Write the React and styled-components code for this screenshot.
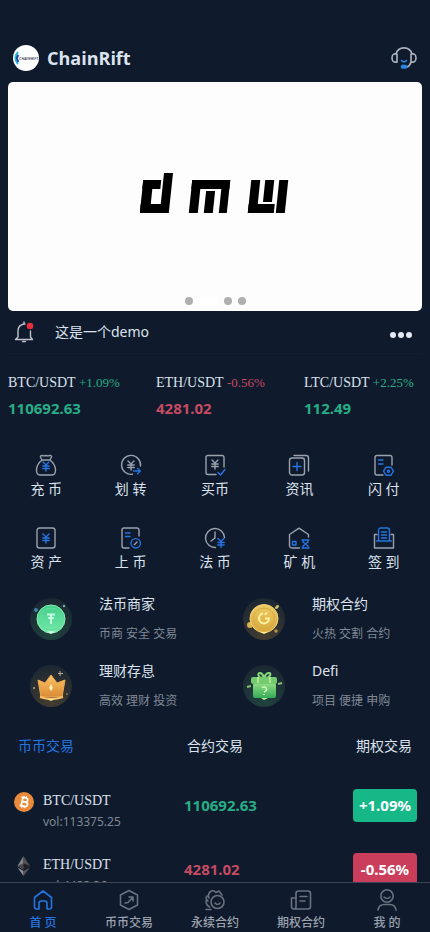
import React from "react";
import styled, { createGlobalStyle } from "styled-components";

const c = {
  bg: "#0f1a2c",
  text: "#dce3ee",
  muted: "#7f8896",
  line: "#9ba2ae",
  blue: "#2475e0",
  green: "#27ae86",
  red: "#c64b62",
};

const GlobalStyle = createGlobalStyle`
  * { box-sizing: border-box; }
  body {
    margin: 0;
    background: ${c.bg};
    color: ${c.text};
    font-family: "Noto Sans", "Noto Sans CJK SC", sans-serif;
    font-size: 14px;
    line-height: 20px;
  }
  button { font: inherit; color: inherit; background: none; border: 0; padding: 0; cursor: pointer; }
  a { color: inherit; text-decoration: none; }
  h1, p { margin: 0; }
  svg { display: block; }
`;

const Screen = styled.div`
  display: flex;
  flex-direction: column;
  height: 100vh;
`;

const Content = styled.main`
  flex: 1;
  min-height: 0;
  overflow-y: auto;
  scrollbar-width: none;
`;

const Header = styled.header`
  display: flex;
  align-items: center;
  gap: 8px;
  padding: 42px 13px 8px;
`;

const Brand = styled.h1`
  flex: 1;
  font-family: "Open Sans", sans-serif;
  font-size: 18px;
  font-weight: 700;
  line-height: 32px;
`;

const Banner = styled.section`
  display: grid;
  grid-template-rows: 1fr auto;
  justify-items: center;
  height: 229px;
  margin: 0 8px;
  padding: 9px 0 6px;
  border-radius: 5px;
  background: #fefdfe;
`;

const BannerLogo = styled.div`
  align-self: center;
`;

const Dots = styled.div`
  display: flex;
  gap: 6px;
`;

const Dot = styled.button`
  width: ${(p) => (p.$active ? 19 : 8)}px;
  height: 8px;
  border-radius: 4px;
  background: ${(p) => (p.$active ? "#fff" : "#afafaf")};
`;

const Notice = styled.section`
  display: flex;
  align-items: center;
  height: 43px;
  margin: 0 8px;
  padding: 0 10px 0 5px;
  border-bottom: 1px solid #131e30;
`;

const NoticeText = styled.p`
  flex: 1;
  padding-left: 20px;
`;

const More = styled.button`
  padding-top: 6px;
`;

const Tickers = styled.section`
  display: grid;
  grid-template-columns: repeat(3, 1fr);
  gap: 36px;
  padding: 19px 14px 18px 8px;
`;

const Pair = styled.div`
  font-family: "Liberation Serif", serif;
  font-size: 14px;
  white-space: nowrap;
`;

const Change = styled.span`
  font-size: 13px;
  color: ${(p) => (p.$down ? c.red : c.green)};
`;

const Price = styled.div`
  font-size: 15px;
  font-weight: 700;
  color: ${(p) => (p.$down ? c.red : c.green)};
`;

const TickerPrice = styled(Price)`
  margin-top: 5px;
`;

const Actions = styled.nav`
  display: grid;
  grid-template-columns: repeat(5, 1fr);
  row-gap: 17px;
  padding: 10px 4px 0;
`;

const Action = styled.a`
  display: flex;
  flex-direction: column;
  align-items: center;
  gap: 3px;
  height: 56px;
  padding-top: 8px;
  white-space: nowrap;
`;

const Features = styled.section`
  display: grid;
  grid-template-columns: repeat(2, 1fr);
  padding: 10px 2px 0;
`;

const Feature = styled.a`
  display: flex;
  align-items: center;
  gap: 27px;
  height: 67px;
  padding-left: 28px;
`;

const FeatureNote = styled.p`
  margin-top: 10px;
  font-size: 12px;
  color: ${c.muted};
`;

const Tabs = styled.div`
  display: flex;
  justify-content: space-between;
  padding: 17px 18px;
`;

const Tab = styled.button`
  color: ${(p) => (p.$active ? c.blue : c.text)};
`;

const Market = styled.a`
  display: grid;
  grid-template-columns: 20px 132px 1fr 64px;
  column-gap: 9px;
  align-items: center;
  height: 64px;
  padding: 0 13px 0 14px;
`;

const Coin = styled.svg.attrs({ width: 20, height: 20, viewBox: "0 0 20 20", "aria-hidden": true })`
  margin-bottom: 6px;
`;

const Volume = styled.div`
  margin-top: 1px;
  font-size: 12px;
  color: ${c.muted};
`;

const MarketInfo = styled.div`
  padding-top: 12px;
`;

const Badge = styled.span`
  height: 33px;
  border-radius: 4px;
  background: ${(p) => (p.$down ? "#cb3e5b" : "#16b888")};
  color: #fff;
  font-size: 15px;
  font-weight: 700;
  line-height: 32px;
  text-align: center;
`;

const BottomNav = styled.nav`
  display: grid;
  grid-template-columns: repeat(5, 1fr);
  height: 50px;
  border-top: 1px solid #3c4554;
  background: ${c.bg};
`;

const NavItem = styled.a`
  display: flex;
  flex-direction: column;
  align-items: center;
  gap: 3px;
  padding-top: 6px;
  font-size: 12px;
  line-height: 18px;
  font-weight: 500;
  color: ${(p) => (p.$active ? c.blue : "#9aa1ac")};
`;

const NavIcon = styled.svg.attrs({
  width: 22, height: 22, viewBox: "0 0 22 22", fill: "none",
  strokeWidth: 1.6, strokeLinecap: "round", strokeLinejoin: "round", "aria-hidden": true,
})`
  stroke: ${(p) => (p.$active ? c.blue : "#69717e")};
`;

const LineIcon = styled.svg.attrs({
  width: 22, height: 22, viewBox: "0 0 22 22", fill: "none",
  strokeWidth: 1.4, strokeLinecap: "round", strokeLinejoin: "round", "aria-hidden": true,
})`
  stroke: ${c.line};
  .blue { stroke: ${c.blue}; }
`;

const Yen = ({ x = 11, y = 11, blue }) => (
  <path className={blue ? "blue" : undefined} transform={`translate(${x} ${y})`}
    d="M-3-4 0-1 3-4M0-1V5M-3.2 0H3.2M-3.2 2.5H3.2" />
);

const actions = [
  ["充 币", <><path d="M7 6 5.5 3Q5 1.5 7 1.5Q9 2.2 11 1.5Q13 2.2 15 1.5Q17 1.5 16.5 3L15 6M7 6H15M7 6Q2 10 1.5 15.5Q1.3 21 5 21H17Q20.7 21 20.5 15.5Q20 10 15 6" /><Yen y={12} blue /></>],
  ["划 转", <><path d="M12.5 20.3A9.5 9.5 0 1 1 20.5 12" /><Yen /><path className="blue" d="M13.5 17H20M17.5 14.2 20.3 17 17.5 19.8" /></>],
  ["买币", <><path d="M20 13V3.5Q20 1.5 18 1.5H4Q2 1.5 2 3.5V18.5Q2 20.5 4 20.5H12" /><Yen y={10} /><path className="blue" d="M14 18.5 16.5 21 21 15.5" /></>],
  ["资讯", <><rect x="1.5" y="4" width="15" height="17" rx="2.5" /><path d="M6 1.5H18Q20.5 1.5 20.5 4V17" /><path className="blue" d="M9 8.5V16.5M5 12.5H13" /></>],
  ["闪 付", <><path d="M19 11V3.5Q19 1.5 17 1.5H4Q2 1.5 2 3.5V19Q2 21 4 21H10" /><path className="blue" d="M5.5 6H10M5.5 10H10M13 13.2H18L20.5 17.2 18 21.2H13L10.5 17.2Z" /><circle className="blue" cx="15.5" cy="17.2" r="1" /></>],
  ["资 产", <><rect x="2" y="1" width="18" height="20" rx="2.5" /><Yen blue /></>],
  ["上 币", <><path d="M19 9V3Q19 1 17 1H4Q2 1 2 3V19Q2 21 4 21H9" /><path className="blue" d="M5.5 6H10M5.5 9.5H10" /><path d="M14.3 17.7 17 15" /><circle className="blue" cx="15.7" cy="16.3" r="4.7" /></>],
  ["法 币", <><path d="M11.5 20.5A9.5 9.5 0 1 1 20.5 10.5M11 5V11L7 14" /><Yen x={17} y={15.5} blue /></>],
  ["矿 机", <><path d="M11.5 21H4Q1.5 21 1.5 18.5V7.5L11 1.2 20.5 7.5V10" /><path className="blue" d="M4.5 14.5H8V18H4.5ZM14 13H21M14 21H21M15 13V15L17.5 17 15 19V21M20 13V15L17.5 17 20 19V21" /></>],
  ["签 到", <><path d="M4 7.5H1.5V21H20.5V7.5H18" /><path className="blue" d="M5.5 14V3.5Q5.5 1 8 1H14Q16.5 1 16.5 3.5V14M3.5 14H18.5M8.5 5H13.5M8.5 8H13.5M8.5 11H13.5" /></>],
];

const Medal = ({ tint, children }) => (
  <svg width="42" height="42" viewBox="0 0 42 42" aria-hidden="true">
    <defs>
      <radialGradient id={`halo-${tint}`} cx=".5" cy=".85" r=".85">
        <stop stopColor={tint === "gold" || tint === "orange" ? "#453d30" : "#20433f"} />
        <stop offset="1" stopColor="#1b2732" />
      </radialGradient>
      <linearGradient id={`fill-${tint}`} x2="0" y2="1">
        <stop stopColor={{ mint: "#42ce8a", gold: "#ecca63", orange: "#ffc568", green: "#92de85" }[tint]} />
        <stop offset="1" stopColor={{ mint: "#76e9aa", gold: "#d8a83d", orange: "#d98a35", green: "#35aa57" }[tint]} />
      </linearGradient>
    </defs>
    <circle cx="21" cy="21" r="21" fill={`url(#halo-${tint})`} />
    {children}
  </svg>
);

const features = [
  ["法币商家", "币商 安全 交易", <Medal tint="mint">
    <circle cx="21" cy="21" r="14" fill="url(#fill-mint)" stroke="#86f0b1" />
    <circle cx="21" cy="21" r="11" fill="none" stroke="#5fdf9b" />
    <path d="M17 16.5H25M21 16.5V26M18 20H24" stroke="#c1ffe0" strokeWidth="2" fill="none" />
    <circle cx="6" cy="12" r="2" fill="#3c87a5" /><circle cx="34" cy="8" r="1.3" fill="#67ac9d" />
    <path d="M17 34Q21 32 25 34L21 36Z" fill="#c8ffdc" />
  </Medal>],
  ["期权合约", "火热 交割 合约", <Medal tint="gold">
    <circle cx="7" cy="27" r="3" fill="#dcb34c" /><ellipse cx="34" cy="9" rx="2.3" ry="1.5" transform="rotate(-45 34 9)" fill="#cfc168" /><circle cx="33" cy="33" r="1.7" fill="#b39845" />
    <circle cx="21" cy="20.5" r="14" fill="url(#fill-gold)" stroke="#f1d47c" />
    <circle cx="21" cy="20.5" r="10.5" fill="none" stroke="#d8ab43" />
    <path d="M20 15.5A5 5 0 1 0 26 20.5H22M22 17 24 14.5" fill="none" stroke="#fff1a3" strokeWidth="2" />
    <path d="M17 34H25L21 36Z" fill="#fff08e" />
  </Medal>],
  ["理财存息", "高效 理财 投资", <Medal tint="orange">
    <path d="M8 15 15 18 21 10 27 18 35 15 32 32H11Z" fill="url(#fill-orange)" stroke="#efaa50" strokeLinejoin="round" />
    <path d="M10 32Q21 36 33 32" fill="none" stroke="#ffc36b" strokeWidth="2" />
    <path d="M21 19 23 23 21 26 19 23Z" fill="#fff0b0" />
    <path d="M30 6V11M28 8.5H33" stroke="#b7b394" /><circle cx="4" cy="23" r="1" fill="#b4ad8b" /><circle cx="37" cy="29" r="1" fill="#937844" />
    <path d="M17 34H25L21 36Z" fill="#ffe287" />
  </Medal>],
  ["Defi", "项目 便捷 申购", <Medal tint="green">
    <path d="M20 13C15 13 14 8 17 8S20 11 21 13C22 10 23 8 26 8S27 13 22 13" fill="none" stroke="#88d97b" strokeWidth="2" />
    <rect x="10" y="18" width="23" height="15" rx="2" fill="url(#fill-green)" />
    <rect x="8" y="12" width="26" height="7" rx="2" fill="#75c96e" />
    <path d="M15 12V18M27 12V18" stroke="#ace798" strokeWidth="2" />
    <path d="M19 23Q21 21 23 23T21 27M21 29V30" fill="none" stroke="#d1ffb7" strokeWidth="1.6" />
    <path d="M4 22 8 21M35 19 39 18" stroke="#87bd75" strokeWidth="2" /><path d="M18 33H25L21 35Z" fill="#b9f0a2" />
  </Medal>],
];

const tickers = [
  ["BTC/USDT", "+1.09%", "110692.63", false],
  ["ETH/USDT", "-0.56%", "4281.02", true],
  ["LTC/USDT", "+2.25%", "112.49", false],
];

const BitcoinMark = () => (
  <Coin>
    <circle cx="10" cy="10" r="10" fill="#e98b3b" />
    <g transform="rotate(12 10 10)" fill="none" stroke="#fff" strokeWidth="1.7">
      <path d="M6.5 5.7H11Q13.3 5.7 13.3 7.7T11 9.8H8M8 9.8H11.5Q14 9.8 14 12T11.5 14.2H6.5M8 5.7V14.2" />
      <path strokeWidth="1.2" d="M9 4V5.7M11.3 4V5.7M9 14.2V16M11.3 14.2V16" />
    </g>
  </Coin>
);

const EtherMark = () => (
  <Coin>
    <path fill="#85858a" d="M9.5 0V13.5L3.5 10Z" /><path fill="#505055" d="M9.5 0 16 10 9.5 13.5Z" />
    <path fill="#48484c" d="M3.5 10 9.5 7.2V13.5Z" /><path fill="#202126" d="M9.5 7.2 16 10 9.5 13.5Z" />
    <path fill="#919196" d="M3.5 11.5 9.5 15V20Z" /><path fill="#55555a" d="M16 11.5 9.5 15V20Z" />
  </Coin>
);

const markets = [
  ["BTC/USDT", "vol:113375.25", "110692.63", "+1.09%", false, <BitcoinMark />],
  ["ETH/USDT", "vol:4482.36", "4281.02", "-0.56%", true, <EtherMark />],
];

const navItems = [
  ["首 页", <path d="M11 2 19.5 8.5V18Q19.5 20 17.5 20H15V14.5Q15 12 12.5 12H9.5Q7 12 7 14.5V20H4.5Q2.5 20 2.5 18V8.5Z" />],
  ["币币交易", <path d="M11 1.5 19.5 6V16L11 20.5 2.5 16V6ZM7 14 10 13.5 15 8M11 8H15V12" />],
  ["永续合约", <><circle cx="13.5" cy="13" r="6.5" /><path d="M11 14Q13.5 17 16 14M5 9A5 5 0 0 1 7.5 2Q10 1 12 3.5L15 2 18 6M2 12Q2 16 5.5 18M2 20.5H7M3 7Q1 10 4 12" /></>],
  ["期权合约", <path d="M6 9H1.5V17.5Q1.5 20 4 20H18Q20.5 20 20.5 17.5V4.5Q20.5 2 18 2H8.5Q6 2 6 4.5V17.5Q6 20 4 20M10 7.5H17M10 12H15" />],
  ["我 的", <><circle cx="11" cy="7" r="6.2" /><path d="M8 8Q11 11 14 8M2 21Q3 15.5 8 15.5H14Q19 15.5 20 21" /></>],
];

const Avatar = () => (
  <svg width="26" height="26" viewBox="0 0 26 26" aria-hidden="true">
    <circle cx="13" cy="13" r="13" fill="#fff" />
    <path d="M5 7Q0 13 5 19" fill="none" stroke="#21b9d5" strokeWidth="2" />
    <path d="M5.5 10Q2.5 13 5.5 17" fill="none" stroke="#244daa" strokeWidth="2" />
    <text x="6" y="15" fill="#30334b" fontFamily="Open Sans, sans-serif" fontSize="4" fontStyle="italic" fontWeight="600">CHAINRIFT</text>
  </svg>
);

const SupportIcon = () => (
  <svg width="26" height="24" viewBox="0 0 26 24" fill="none" stroke="#aeb5c0" strokeWidth="1.6" strokeLinecap="round" aria-hidden="true">
    <path d="M5 8A8.3 8.3 0 0 1 21 8M6 8V16Q1 17 1 12T6 8M20 8V16Q25 17 25 12T20 8M20 16Q19 20 16 21" />
    <path d="M10.5 14.5Q13 17 15.5 14.5" stroke="#2b87ea" />
    <rect x="10" y="19" width="6" height="3.5" rx="1.5" fill="#2b87ea" stroke="#2b87ea" strokeWidth=".5" />
  </svg>
);

const DmwLogo = () => (
  <svg width="150" height="42" viewBox="0 0 150 42" role="img" aria-label="dmw">
    <g transform="translate(4) skewX(-6)" fill="#000">
      <rect x="0" y="7" width="10" height="33" /><rect x="0" y="7" width="18" height="9" /><rect x="0" y="31" width="25" height="9" /><rect x="20" y="0" width="9" height="40" />
      <rect x="49" y="7" width="9" height="33" /><rect x="49" y="7" width="38" height="9" /><rect x="64" y="18" width="9" height="22" /><rect x="79" y="7" width="8" height="33" />
      <rect x="108" y="7" width="9" height="33" /><rect x="108" y="31" width="26" height="9" /><rect x="122" y="7" width="9" height="22" /><rect x="136" y="7" width="9" height="33" />
    </g>
  </svg>
);

const BellIcon = () => (
  <svg width="22" height="22" viewBox="0 0 22 22" fill="none" stroke="#bdc4ce" strokeWidth="1.4" strokeLinecap="round" strokeLinejoin="round" aria-hidden="true">
    <path d="M11 1V3Q5 4 5 10V16L2.5 18.5H19.5L17.5 16V10M11 3H12" />
    <path d="M9.5 20.5H12.5" /><circle cx="17" cy="5" r="3.3" fill="#e52e3c" stroke="none" />
  </svg>
);

export default function App() {
  return (
    <>
      <GlobalStyle />
      <Screen>
        <Content>
          <Header>
            <Avatar />
            <Brand>ChainRift</Brand>
            <button aria-label="客服"><SupportIcon /></button>
          </Header>
          <Banner>
            <BannerLogo><DmwLogo /></BannerLogo>
            <Dots>
              {[1, 2, 3, 4].map((n) => <Dot key={n} $active={n === 2} aria-label={`${n}`} />)}
            </Dots>
          </Banner>
          <Notice>
            <BellIcon />
            <NoticeText>这是一个demo</NoticeText>
            <More aria-label="更多">
              <svg width="22" height="6" viewBox="0 0 22 6" fill="#e4eaf4" aria-hidden="true">
                <circle cx="3" cy="3" r="3" /><circle cx="11" cy="3" r="3" /><circle cx="19" cy="3" r="3" />
              </svg>
            </More>
          </Notice>
          <Tickers>
            {tickers.map(([pair, change, price, down]) => (
              <div key={pair}>
                <Pair>{pair} <Change $down={down}>{change}</Change></Pair>
                <TickerPrice $down={down}>{price}</TickerPrice>
              </div>
            ))}
          </Tickers>
          <Actions>
            {actions.map(([label, icon]) => (
              <Action href="#" key={label}><LineIcon>{icon}</LineIcon>{label}</Action>
            ))}
          </Actions>
          <Features>
            {features.map(([title, note, icon]) => (
              <Feature href="#" key={title}>
                {icon}
                <div><p>{title}</p><FeatureNote>{note}</FeatureNote></div>
              </Feature>
            ))}
          </Features>
          <Tabs>
            <Tab $active>币币交易</Tab><Tab>合约交易</Tab><Tab>期权交易</Tab>
          </Tabs>
          {markets.map(([pair, volume, price, change, down, icon]) => (
            <Market href="#" key={pair}>
              {icon}
              <MarketInfo><Pair>{pair}</Pair><Volume>{volume}</Volume></MarketInfo>
              <Price $down={down}>{price}</Price>
              <Badge $down={down}>{change}</Badge>
            </Market>
          ))}
        </Content>
        <BottomNav>
          {navItems.map(([label, icon], i) => (
            <NavItem href="#" key={label} $active={i === 0}>
              <NavIcon $active={i === 0}>{icon}</NavIcon>{label}
            </NavItem>
          ))}
        </BottomNav>
      </Screen>
    </>
  );
}
